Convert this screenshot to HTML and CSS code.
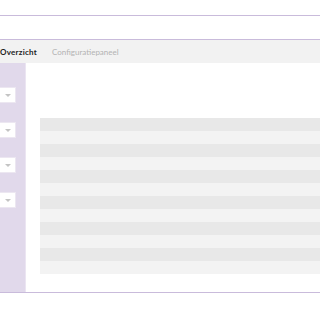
FILE: index.html
```html
<!DOCTYPE html>
<html lang="nl">
<head>
  <meta charset="UTF-8">
  <title>Overzicht</title>
  <link rel="stylesheet" href="styles.css">
</head>
<body>
  <div class="topbar"></div>
  <div class="subbar"></div>

  <!-- Tabs -->
  <div class="tabs">
    <span class="tab active">Overzicht</span>
    <span class="tab">Configuratiepaneel</span>
  </div>

  <div class="main">
    <!-- Filters -->
    <div class="sidebar">
      <div class="select"><span class="caret"></span></div>
      <div class="select"><span class="caret"></span></div>
      <div class="select"><span class="caret"></span></div>
      <div class="select"><span class="caret"></span></div>
    </div>

    <!-- Tabel met lege rijen -->
    <div class="content">
      <table class="grid">
        <tbody>
          <tr><td></td></tr>
          <tr><td></td></tr>
          <tr><td></td></tr>
          <tr><td></td></tr>
          <tr><td></td></tr>
          <tr><td></td></tr>
          <tr><td></td></tr>
          <tr><td></td></tr>
          <tr><td></td></tr>
          <tr><td></td></tr>
          <tr><td></td></tr>
          <tr><td></td></tr>
        </tbody>
      </table>
    </div>
  </div>
</body>
</html>
```

FILE: styles.css
```css
body {
  margin: 0;
  background-color: #fff;
  font-family: Lato, "Open Sans", sans-serif;
}

.topbar {
  height: 15px;
  border-bottom: 1px solid #c9bbdb;
}

.subbar {
  height: 23px;
  border-bottom: 1px solid #c9bbdb;
}

.tabs {
  height: 23px;
  background-color: #f2f2f2;
  display: flex;
  align-items: center;
  gap: 15px;
  font-size: 8px;
}

.tab {
  color: #b3b3b3;
}

.tab.active {
  color: #222;
  font-weight: bold;
  letter-spacing: 0.25px;
}

.main {
  display: flex;
  height: 229px;
  border-bottom: 1px solid #c9bbdb;
}

.sidebar {
  width: 25px;
  background-color: #e1d9eb;
  border-right: 1px solid #ebe5f2;
  display: flex;
  flex-direction: column;
  gap: 19px;
  padding-top: 24px;
}

.select {
  width: 15px;
  height: 14px;
  background-color: #fff;
  border: 1px solid #ece7f1;
  border-left: none;
  display: flex;
  align-items: center;
  justify-content: center;
}

.caret {
  width: 0;
  height: 0;
  border-left: 3px solid transparent;
  border-right: 3px solid transparent;
  border-top: 3px solid #c4c4c4;
}

.content {
  flex: 1;
  padding: 55px 0 0 14px;
}

.grid {
  width: 100%;
  border-collapse: collapse;
}

.grid td {
  height: 13px;
  padding: 0;
}

.grid tr:nth-child(odd) {
  background-color: #e8e8e8;
}

.grid tr:nth-child(even) {
  background-color: #f3f3f3;
}
```
